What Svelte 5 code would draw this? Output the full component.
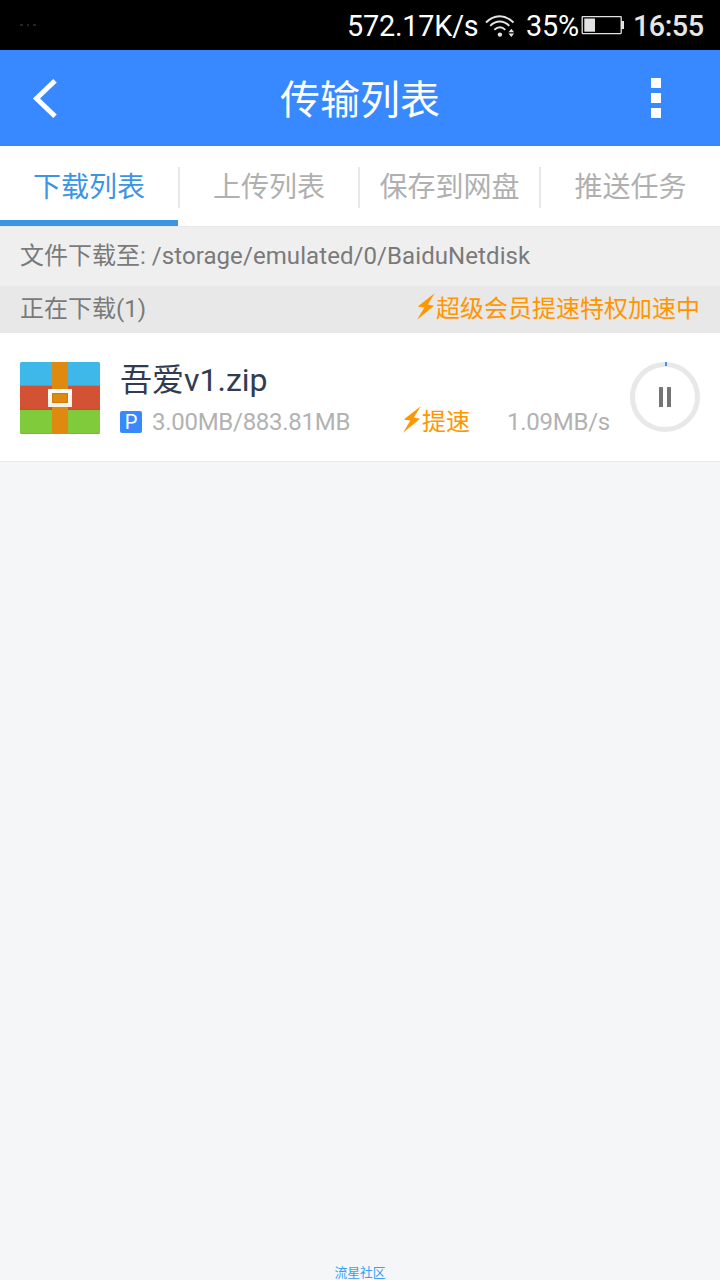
<script>
  const tabs = ['下载列表', '上传列表', '保存到网盘', '推送任务'];
  let active = $state(0);
</script>

{#snippet bolt()}
  <svg class="bolt" width="18" height="27" viewBox="0 0 18 27">
    <path d="M17.700 0.3 0.700 13.600 7.400 14.400 0 26.800 17 12.800 10.800 11.400Z" fill="#ff9600" />
  </svg>
{/snippet}

<div class="screen">
  <div class="status">
    <span class="notice"><i></i><i></i><i></i></span>
    <span class="rate">572.17K/s</span>
    <svg class="wifi" width="30" height="24" viewBox="0 0 30 24" fill="none" stroke="#e4e4e4" stroke-width="1.9">
      <path d="M1 8.5C9 .1 20 .1 28.500 8.500" />
      <path d="M5.200 11.800C11 6 18.500 6 24.300 11.800" />
      <path d="M9.300 15.800C13 12.400 17 12.400 20.300 15.800" />
      <circle cx="14.900" cy="20.600" r="2.200" fill="#e4e4e4" stroke="none" />
      <path d="M26.300 14.700l2.800 3.600h-5.600zM26.300 23l2.800-3.600h-5.600z" fill="#e4e4e4" stroke="none" />
    </svg>
    <span class="percent">35%</span>
    <svg class="battery" width="43" height="20" viewBox="0 0 43 20">
      <rect x="1.200" y="1.600" width="39" height="17" rx="0.500" fill="none" stroke="#e2e2e2" stroke-width="1.300" />
      <rect x="3.300" y="3.500" width="10.700" height="13.200" fill="#e2e2e2" />
      <path d="M40 6h3v8h-3z" fill="#e2e2e2" />
    </svg>
    <span class="time">16:55</span>
  </div>

  <header>
    <svg class="back" width="26" height="42" viewBox="0 0 26 42">
      <path d="M23 2.700 4.500 20.500 23 38.300" fill="none" stroke="#fff" stroke-width="5" />
    </svg>
    <h1>传输列表</h1>
    <svg width="10" height="40" viewBox="0 0 10 40" fill="#fff">
      <path d="M0 0h10v10H0zM0 15h10v10H0zM0 30h10v10H0z" />
    </svg>
  </header>

  <nav>
    {#each tabs as tab, i}
      <button class:active={active === i} onclick={() => (active = i)}>{tab}</button>
      {#if i < tabs.length - 1}<span class="sep"></span>{/if}
    {/each}
  </nav>

  <div class="path">文件下载至: <span>/storage/emulated/0/BaiduNetdisk</span></div>

  <div class="group">
    <span class="count">正在下载(1)</span>
    <span class="boost">{@render bolt()}超级会员提速特权加速中</span>
  </div>

  <div class="item">
    <svg class="archive" width="80" height="72" viewBox="0 0 80 72">
      <defs>
        <clipPath id="corners"><rect width="80" height="72" rx="1.500" /></clipPath>
        <linearGradient id="buckle" x2="0" y2="1">
          <stop offset="0" stop-color="#fff" />
          <stop offset="1" stop-color="#f7eee3" />
        </linearGradient>
      </defs>
      <g clip-path="url(#corners)">
        <rect width="80" height="24" fill="#3db8e8" />
        <rect y="24" width="80" height="24" fill="#d35233" />
        <rect y="48" width="80" height="24" fill="#7fcb3b" />
        <path d="M0 23.500h80M0 71.500h80" stroke="#000" stroke-opacity=".08" />
        <path d="M0 47.500h80" stroke="#9e4a20" stroke-opacity=".35" />
        <rect x="32" width="16" height="72" fill="#df8911" />
      </g>
      <path d="M28 27h24v18H28zM32 31v10h16V31z" fill="url(#buckle)" fill-rule="evenodd" />
      <rect x="32.500" y="31.500" width="15" height="9" fill="none" stroke="#bd750f" stroke-opacity=".6" />
    </svg>
    <div class="info">
      <div class="name">吾爱v1.zip</div>
      <div class="meta">
        <span class="badge">P</span>
        <span class="size">3.00MB/883.81MB</span>
        <span class="boost">{@render bolt()}提速</span>
        <span class="speed">1.09MB/s</span>
      </div>
    </div>
    <svg class="pause" width="70" height="70" viewBox="0 0 70 70">
      <circle cx="35" cy="35" r="32.500" fill="none" stroke="#e8e8e8" stroke-width="5" />
      <path d="M35 0h2v4h-2z" fill="#3b95e5" />
      <rect x="29" y="25" width="4" height="20" rx=".5" fill="#757575" />
      <rect x="37" y="25" width="4" height="20" rx=".5" fill="#757575" />
    </svg>
  </div>

  <footer>流星社区</footer>
</div>

<style>
  :global(body) { background: #f5f6f8; }
  .screen {
    width: 720px;
    height: 1280px;
    display: flex;
    flex-direction: column;
    overflow: hidden;
    background: #f5f6f8;
    font-family: Roboto, "Noto Sans CJK SC", sans-serif;
    color: #7a7a7a;
  }
  .status {
    height: 50px;
    flex: none;
    box-sizing: border-box;
    padding: 2px 16px 0 20px;
    display: flex;
    align-items: center;
    background: #000;
    color: #fff;
    font-size: 28.800px;
    letter-spacing: -0.2px;
    line-height: 50px;
    white-space: nowrap;
  }
  .notice { display: flex; gap: 4px; margin-right: auto; padding-bottom: 3px; }
  .notice i { width: 2.500px; height: 2px; background: #242424; }
  .rate { width: 131px; }
  .wifi { margin: 0 11px 1px 7px; }
  .percent { width: 55px; }
  .battery { margin: 0 9px 2px 0; }
  .time { font-weight: 500; color: #e6e6e6; width: 71px; letter-spacing: -0.5px; }
  header {
    height: 96px;
    flex: none;
    box-sizing: border-box;
    padding: 0 59px 0 32px;
    display: grid;
    grid-template-columns: 29px 1fr 10px;
    align-items: center;
    background: #3888ff;
  }
  .back { margin-top: 2px; }
  h1 {
    margin: 0;
    padding: 6px 0 0 8px;
    text-align: center;
    color: #fff;
    font-size: 40px;
    line-height: 90px;
    font-weight: 400;
  }
  nav {
    height: 80px;
    flex: none;
    display: grid;
    grid-template-columns: 178px 2px 178px 2px 179px 2px 179px;
    align-items: center;
    background: #fff;
  }
  button {
    height: 80px;
    box-sizing: border-box;
    padding: 9px 0 0;
    border: 0;
    border-bottom: 6px solid transparent;
    background: none;
    font: 400 28px/65px Roboto, "Noto Sans CJK SC", sans-serif;
    color: #b0b0b0;
    white-space: nowrap;
  }
  button.active { color: #3b95e5; border-color: #3b95e5; }
  .sep { height: 41px; margin-top: 3px; background: #e8e8e8; }
  .path {
    height: 60px;
    flex: none;
    box-sizing: border-box;
    padding-left: 20px;
    border-top: 1px solid #e8e8e8;
    background: #efefef;
    font-size: 24px;
    line-height: 59px;
  }
  .path span { letter-spacing: 0.08px; }
  .group {
    height: 47px;
    flex: none;
    padding: 0 20px;
    display: flex;
    justify-content: space-between;
    background: #e8e8e8;
    font-size: 24px;
    line-height: 49px;
  }
  .count { line-height: 47px; }
  .boost { display: flex; align-items: center; color: #ff9600; }
  .bolt { margin: 0 1px 6px 0; }
  .item {
    height: 129px;
    flex: none;
    box-sizing: border-box;
    padding: 0 20px;
    display: flex;
    border-bottom: 1px solid #e8e8e8;
    background: #fff;
  }
  .archive { margin-top: 29px; }
  .info { width: 490px; margin: 25px 20px 0; }
  .name { font-size: 32px; line-height: 44px; color: #323c50; }
  .meta {
    display: flex;
    align-items: center;
    font-size: 24px;
    line-height: 40px;
    color: #b2b2b2;
    white-space: nowrap;
  }
  .badge {
    width: 22px;
    height: 22px;
    margin-right: 10px;
    border-radius: 2px;
    background: #3888ff;
    color: #fff;
    font-size: 20px;
    line-height: 23px;
    font-weight: 400;
    text-align: center;
  }
  .size { width: 251px; letter-spacing: -0.28px; }
  .speed { margin-left: auto; letter-spacing: -0.25px; }
  .pause { margin-top: 29px; flex: none; }
  footer {
    margin-top: auto;
    height: 14px;
    text-align: center;
    color: #35a0f5;
    font-size: 12.800px;
    line-height: 14px;
  }
</style>
